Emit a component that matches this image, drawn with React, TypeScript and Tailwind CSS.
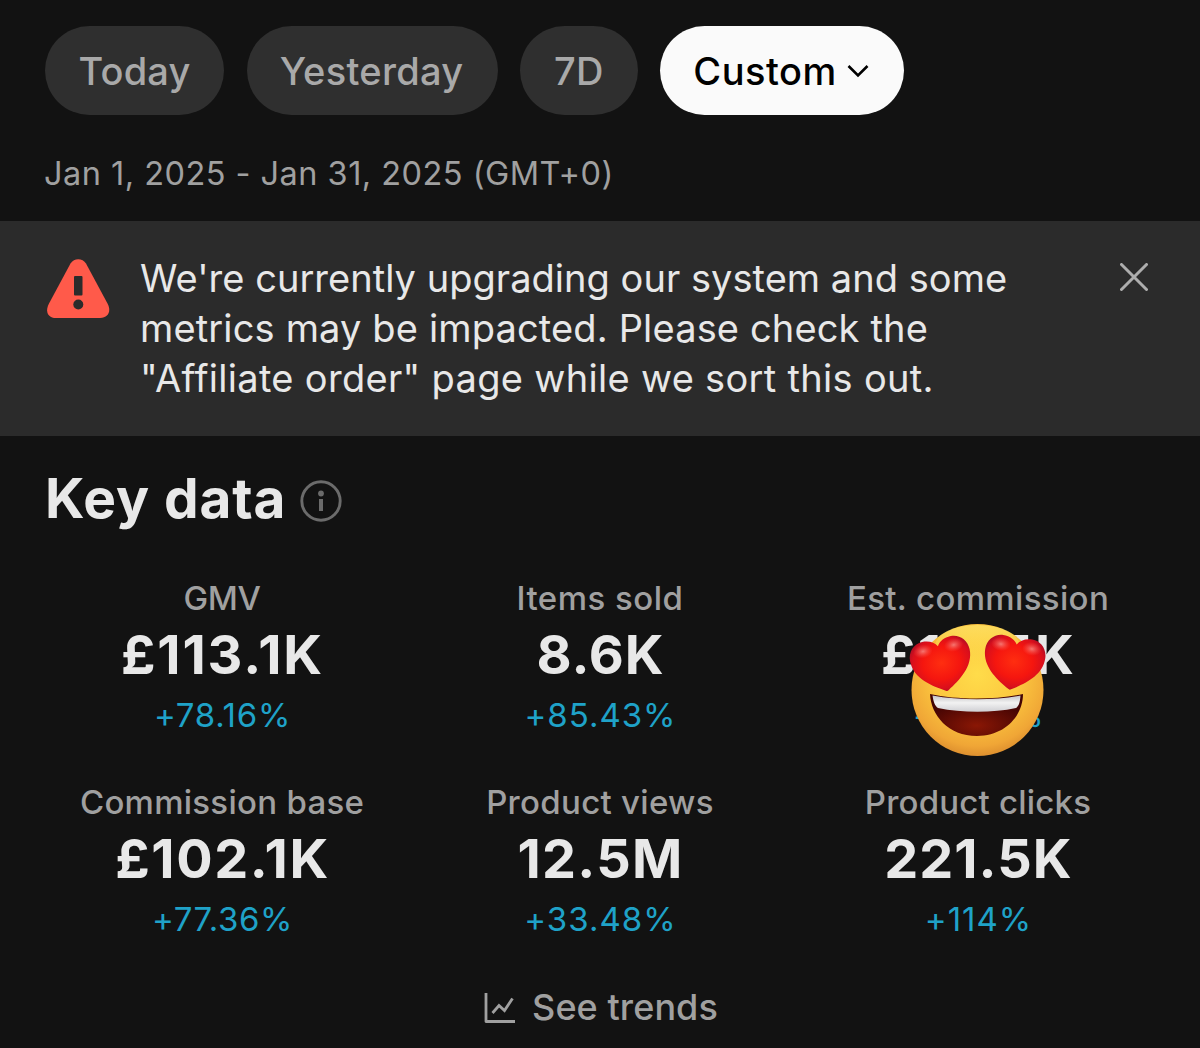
import React from "react";

const metrics = [
  { label: "GMV", ls: "tracking-[-0.39px]", value: "£113.1K", vs: "tracking-[1.85px]", change: "+78.16%", cs: "tracking-[0.75px]" },
  { label: "Items sold", ls: "tracking-[0.5px]", value: "8.6K", vs: "tracking-[0.9px]", change: "+85.43%", cs: "tracking-[1px]" },
  { label: "Est. commission", ls: "tracking-[0.35px]", value: "£16.5K", vs: "tracking-[2.1px]", change: "+77.16%", cs: "tracking-[0.5px]", covered: true },
  { label: "Commission base", ls: "tracking-[0.27px]", value: "£102.1K", vs: "tracking-[1.6px]", change: "+77.36%", cs: "tracking-[0.59px]" },
  { label: "Product views", ls: "tracking-[0.3px]", value: "12.5M", vs: "tracking-[1.2px]", change: "+33.48%", cs: "tracking-[1.05px]" },
  { label: "Product clicks", ls: "tracking-[0.2px]", value: "221.5K", vs: "tracking-[1px]", change: "+114%", cs: "tracking-[1px]" },
];

function Heart({ transform }: { transform: string }) {
  const d = "M1.500 28.500C.5 29.300-.5 29.300-1.500 28.500C-14 21-31 10-31-8C-31-18-23.500-25-15-25C-8-25-2.500-22-0-17.500C2.500-22 8-25 15-25C23.500-25 31-18 31-8C31 10 14 21 1.500 28.500Z";
  return (
    <g transform={transform}>
      <path d={d} fill="url(#heart)" />
      <ellipse cx="-16" cy="-15.500" rx="10" ry="7" fill="url(#shine)" />
      <ellipse cx="16" cy="-15.500" rx="10" ry="7" fill="url(#shine)" />
    </g>
  );
}

function HeartEyes() {
  return (
    <svg className="h-[136px] w-[140px]" viewBox="0 0 140 136" aria-label="Heart eyes">
      <defs>
        <radialGradient id="face" cx="0.5" cy="0.38" r="0.64">
          <stop offset="0" stopColor="#ffdc4a" />
          <stop offset="0.5" stopColor="#fcc83f" />
          <stop offset="0.85" stopColor="#f0a636" />
          <stop offset="1" stopColor="#d98a2d" />
        </radialGradient>
        <linearGradient id="topGlow" x1="0" y1="0" x2="0" y2="1">
          <stop offset="0" stopColor="#fff27a" stopOpacity="0.55" />
          <stop offset="1" stopColor="#ffe14f" stopOpacity="0" />
        </linearGradient>
        <radialGradient id="heart" cx="0.5" cy="0.46" r="0.62">
          <stop offset="0" stopColor="#ff2e10" />
          <stop offset="0.5" stopColor="#f5160f" />
          <stop offset="0.78" stopColor="#d90f1c" />
          <stop offset="1" stopColor="#980c28" />
        </radialGradient>
        <radialGradient id="shine">
          <stop offset="0" stopColor="#ffb8ae" stopOpacity="0.6" />
          <stop offset="1" stopColor="#ff7060" stopOpacity="0" />
        </radialGradient>
        <linearGradient id="teeth" x1="0" y1="0" x2="0" y2="1">
          <stop offset="0" stopColor="#c4c4c8" />
          <stop offset="0.45" stopColor="#f2f2f2" />
          <stop offset="1" stopColor="#cfcfd3" />
        </linearGradient>
        <radialGradient id="mouth" cx="0.5" cy="0.75" r="0.6">
          <stop offset="0" stopColor="#8a1705" />
          <stop offset="1" stopColor="#430403" />
        </radialGradient>
      </defs>
      <circle cx="70.5" cy="68" r="66" fill="url(#face)" />
      <ellipse cx="70.5" cy="23" rx="42" ry="20" fill="url(#topGlow)" />
      <path d="M23 72C50 78 88 78 116 72C116 93 99 114 70 114C41 114 24 93 23 72Z" fill="url(#mouth)" />
      <path d="M25.500 73.500C52 78.500 88 78.500 113.500 73.500C113 80 112 84 109 86C86 91 55 91 31 86C28 84 26.500 80 25.500 73.500Z" fill="url(#teeth)" />
      <Heart transform="translate(34.5 41) rotate(-12) scale(0.98)" />
      <Heart transform="translate(107 39.5) rotate(9) scale(0.98)" />
    </svg>
  );
}

function Pill({ className, children }: { className: string; children: React.ReactNode }) {
  return (
    <button className={`flex h-[89px] items-center justify-center rounded-full pt-[1px] text-[38px] font-medium ${className}`}>
      {children}
    </button>
  );
}

export default function App() {
  return (
    <div className="flex h-[1048px] w-[1200px] flex-col overflow-hidden whitespace-nowrap bg-[#121212] font-['Inter',sans-serif] text-[#e8e8e8]">
      <div className="flex h-[115px] shrink-0 gap-[22.5px] pl-[45px] pt-[26px]">
        <Pill className="w-[179px] bg-[#2f2f2f] tracking-[0.2px] text-[#a9a9a9]">Today</Pill>
        <Pill className="w-[251px] bg-[#2f2f2f] pr-[1px] tracking-[0.28px] text-[#a9a9a9]">Yesterday</Pill>
        <Pill className="w-[117.5px] bg-[#2f2f2f] tracking-[0.29px] text-[#a9a9a9]">7D</Pill>
        <Pill className="w-[244px] gap-[10px] bg-[#fafafa] pr-[2px] tracking-[0.5px] text-black">
          Custom
          <svg className="h-[14px] w-[22px]" viewBox="0 0 22 14" fill="none" stroke="black" strokeWidth="2.6">
            <path d="M1.5 2L11 11.5L20.5 2" />
          </svg>
        </Pill>
      </div>

      <div className="h-[106px] shrink-0 pl-[44px] pt-[38px] text-[32.5px] leading-[41px] tracking-[0.47px] text-[#a0a0a0]">
        Jan 1, 2025 - Jan 31, 2025 (GMT+0)
      </div>

      <section className="flex h-[215px] shrink-0 bg-[#2b2b2b]">
        <svg className="ml-[46px] mt-[37px] h-[61px] w-[64px]" viewBox="0 0 64 61">
          <path d="M24.5 5.5C28-.2 36.500-.2 40 5.500L61.500 45.500C65.500 53 62.500 60 54 60H10C1.500 60-1 53 3 45.500Z" fill="#ff5a4a" />
          <rect x="28" y="18" width="8.500" height="19.500" rx="1" fill="#2b2b2b" />
          <circle cx="32.300" cy="46.500" r="5" fill="#2b2b2b" />
        </svg>
        <div className="ml-[30px] mt-[32px] flex w-[980px] flex-col text-[38px] leading-[50.2px]">
          <span className="tracking-[0.03px]">We're currently upgrading our system and some</span>
          <span className="tracking-[0.15px]">metrics may be impacted. Please check the</span>
          <span className="tracking-[0.31px]">"Affiliate order" page while we sort this out.</span>
        </div>
        <svg className="mt-[42px] h-[28px] w-[28px]" viewBox="0 0 28 28" stroke="#adadad" strokeWidth="3" strokeLinecap="round">
          <path d="M1.500 1.500L26.500 26.500M26.500 1.500L1.500 26.500" />
        </svg>
      </section>

      <div className="flex h-[141px] shrink-0 items-start pl-[45px] pt-[32px]">
        <h1 className="text-[55px] font-bold leading-[61px] tracking-[0.9px]">Key data</h1>
        <svg className="ml-[14px] mt-[11.5px] h-[42px] w-[42px]" viewBox="0 0 42 42">
          <circle cx="21" cy="21" r="19.200" fill="none" stroke="#6b6b6b" strokeWidth="2.900" />
          <circle cx="21" cy="13.500" r="2.900" fill="#6b6b6b" />
          <rect x="19" y="19" width="4" height="12" fill="#6b6b6b" />
        </svg>
      </div>

      <div className="grid shrink-0 grid-cols-[378px_378px_378px] gap-y-[41px] pl-[33px]">
        {metrics.map((m) => (
          <div key={m.label} className="relative flex flex-col items-center">
            <div className={`pt-[1px] text-[33px] font-medium leading-[40px] text-[#a0a0a0] ${m.ls}`}>{m.label}</div>
            <div className={`pl-[1px] pt-[1px] text-[54px] font-bold leading-[72px] ${m.vs}`}>{m.value}</div>
            <div className={`pl-[1px] text-[33px] leading-[49px] text-[#1fa2c8] ${m.cs}`}>{m.change}</div>
            {m.covered && (
              <div className="absolute left-[118px] top-[45px]">
                <HeartEyes />
              </div>
            )}
          </div>
        ))}
      </div>

      <button className="mt-[39px] flex h-[48px] shrink-0 items-center justify-center gap-[16px] pl-[2px] text-[36px] font-medium tracking-[0.08px] text-[#a0a0a0]">
        <svg className="mt-[2px] h-[32px] w-[32px]" viewBox="0 0 32 32" fill="none" stroke="#a0a0a0" strokeWidth="2.800">
          <path d="M2 1V29.500H31" strokeLinejoin="round" />
          <path d="M8.500 21L15 13.500L20.500 18.500L28.500 6.500" />
        </svg>
        See trends
      </button>
    </div>
  );
}
